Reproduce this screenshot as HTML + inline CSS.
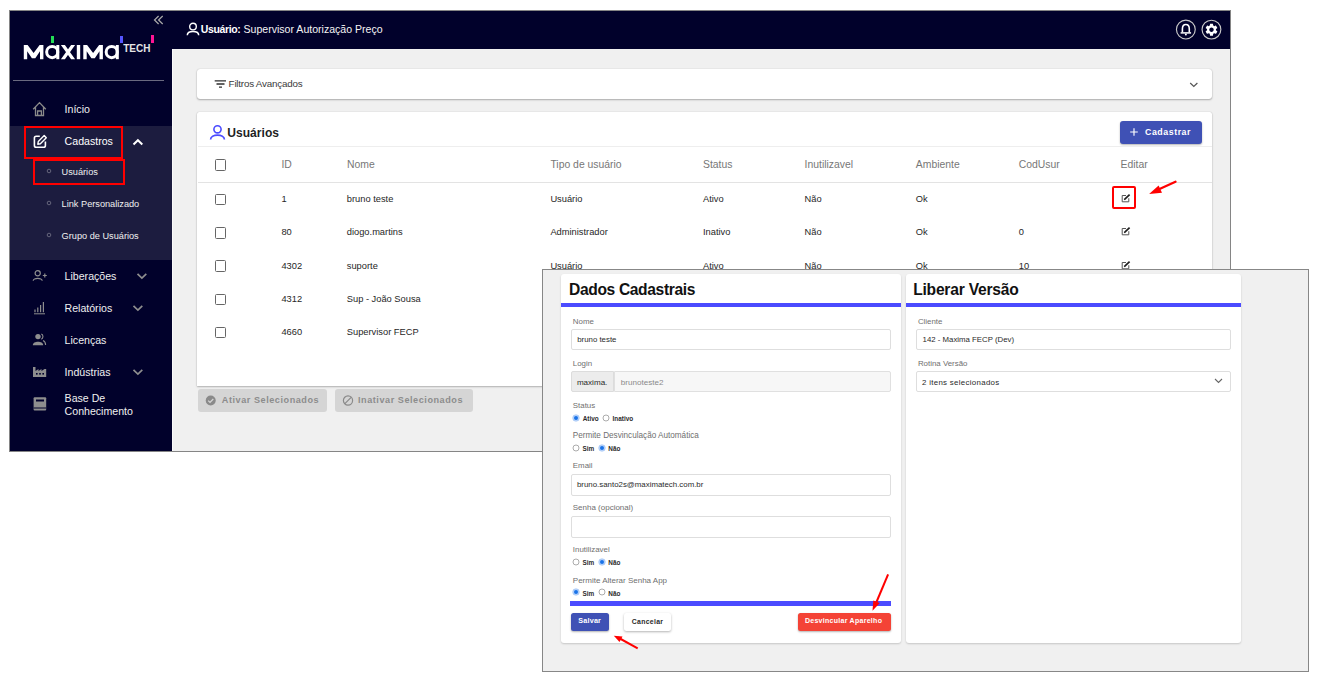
<!DOCTYPE html>
<html><head><meta charset="utf-8"><style>
html,body{margin:0;padding:0;background:#fff;width:1328px;height:692px;overflow:hidden;position:relative;font-family:"Liberation Sans",sans-serif;}
.a{position:absolute;}
.t{position:absolute;line-height:0;white-space:nowrap;}
svg.a{overflow:visible;}
</style></head><body>
<div class="a " style="left:9px;top:10px;width:1222px;height:442px;border:1px solid #858585;box-sizing:border-box;background:#f0f0f0;"></div>
<div class="a " style="left:10px;top:11px;width:162px;height:440px;background:#01012b;"></div>
<div class="a " style="left:172px;top:11px;width:1058px;height:38px;background:#01012b;"></div>
<div class="a " style="left:172px;top:49px;width:1px;height:402px;background:#fafafa;"></div>
<svg class="a" style="left:22px;top:44.6px;" width="100" height="15" viewBox="0 0 100 15"><path d="M1.80 14.20 L1.80 0.00 L5.60 0.00 L11.60 8.00 L17.60 0.00 L21.40 0.00 L21.40 14.20 L18.00 14.20 L18.00 6.20 L13.30 13.20 L9.90 13.20 L5.20 6.20 L5.20 14.20 Z" fill="#fff"/><path d="M61.30 14.20 L61.30 0.00 L65.10 0.00 L71.10 8.00 L77.10 0.00 L80.90 0.00 L80.90 14.20 L77.50 14.20 L77.50 6.20 L72.80 13.20 L69.40 13.20 L64.70 6.20 L64.70 14.20 Z" fill="#fff"/><circle cx="30.2" cy="7.1" r="5.55" fill="none" stroke="#fff" stroke-width="3"/><rect x="34.3" y="0" width="3" height="14.2" fill="#fff"/><circle cx="89.7" cy="7.1" r="5.55" fill="none" stroke="#fff" stroke-width="3"/><rect x="93.8" y="0" width="3" height="14.2" fill="#fff"/><path d="M38.9 0 L42.9 0 L53.1 14.2 L49.1 14.2 Z M49.1 0 L53.1 0 L42.9 14.2 L38.9 14.2 Z" fill="#fff"/><rect x="54.8" y="0" width="3.4" height="14.2" fill="#fff"/></svg>
<div class="a " style="left:50.5px;top:35.6px;width:3.1px;height:7.6px;background:#22dd55;"></div>
<div class="a " style="left:119.6px;top:35.5px;width:3.1px;height:7.6px;background:#5555ff;"></div>
<div class="a " style="left:151px;top:35.3px;width:3.2px;height:8.1px;background:#ff1493;"></div>
<div class="t" style="left:123.2px;top:49.00px;font-size:10px;color:#e6e6e6;font-weight:700;transform:scaleY(1.06);transform-origin:0 0;">TECH</div>
<svg class="a" style="left:153px;top:14.6px;" width="12" height="10" viewBox="0 0 12 10"><path d="M5.6 1 L1.5 5 L5.6 9 M9.7 1 L5.6 5 L9.7 9" fill="none" stroke="#a8a8a8" stroke-width="1.25"/></svg>
<div class="a " style="left:13px;top:80px;width:151px;height:1px;background:#6a6a80;"></div>
<div class="a " style="left:10px;top:126px;width:162px;height:134px;background:#1c1c3f;"></div>
<svg class="a" style="left:32px;top:101px;" width="16" height="16" viewBox="0 0 16 16"><path d="M1.2 8.2 L7.5 1.6 L13.8 8.2 M3.5 6.2 V14.5 H11.5 V6.2 M5.6 14.5 V10 H9.4 V14.5" fill="none" stroke="#8a8a8a" stroke-width="1.3"/></svg>
<div class="t" style="left:64.6px;top:109.00px;font-size:10.6px;color:#f0f0f0;font-weight:400;">Início</div>
<svg class="a" style="left:32px;top:133px;" width="16" height="16" viewBox="0 0 16 16"><path d="M7.8 3.2 H4.2 Q2.4 3.2 2.4 5 V12.4 Q2.4 14.2 4.2 14.2 H11.6 Q13.4 14.2 13.4 12.4 V8.6" fill="none" stroke="#fff" stroke-width="1.6"/><path d="M5.8 11.2 L6.3 8.6 L12.2 2.6 L14.3 4.7 L8.4 10.7 Z" fill="none" stroke="#fff" stroke-width="1.4" stroke-linejoin="round"/></svg>
<div class="t" style="left:64.6px;top:141.00px;font-size:10.6px;color:#fff;font-weight:400;">Cadastros</div>
<svg class="a" style="left:132px;top:138px;" width="12" height="8" viewBox="0 0 12 8"><path d="M1.5 6.5 L5.9 2.2 L10.3 6.5" fill="none" stroke="#fff" stroke-width="2"/></svg>
<svg class="a" style="left:46px;top:167.9px;" width="6" height="6" viewBox="0 0 6 6"><circle cx="3" cy="3" r="1.8" fill="none" stroke="#77778a" stroke-width="0.8"/></svg>
<div class="t" style="left:61.6px;top:172.00px;font-size:9.2px;color:#f0f0f0;font-weight:400;">Usuários</div>
<svg class="a" style="left:46px;top:200px;" width="6" height="6" viewBox="0 0 6 6"><circle cx="3" cy="3" r="1.8" fill="none" stroke="#77778a" stroke-width="0.8"/></svg>
<div class="t" style="left:61.6px;top:204.00px;font-size:9.2px;color:#f0f0f0;font-weight:400;">Link Personalizado</div>
<svg class="a" style="left:46px;top:232.2px;" width="6" height="6" viewBox="0 0 6 6"><circle cx="3" cy="3" r="1.8" fill="none" stroke="#77778a" stroke-width="0.8"/></svg>
<div class="t" style="left:61.6px;top:236.00px;font-size:9.2px;color:#f0f0f0;font-weight:400;">Grupo de Usuários</div>
<div class="a " style="left:23.5px;top:125.5px;width:99.5px;height:33px;border:2.6px solid #ff0000;box-sizing:border-box;"></div>
<div class="a " style="left:33px;top:158.5px;width:92px;height:26px;border:2.6px solid #ff0000;box-sizing:border-box;"></div>
<svg class="a" style="left:32px;top:270px;" width="16" height="12" viewBox="0 0 16 12"><circle cx="5.7" cy="3.3" r="2.6" fill="none" stroke="#8e8e8e" stroke-width="1.2"/><path d="M1.2 10.8 C1.2 7.5 10.2 7.5 10.2 10.8" fill="none" stroke="#8e8e8e" stroke-width="1.2"/><path d="M10.8 5.5 H14.8 M12.8 3.5 V7.5" stroke="#8e8e8e" stroke-width="1.2"/></svg>
<div class="t" style="left:64.6px;top:276.00px;font-size:10.6px;color:#f0f0f0;font-weight:400;">Liberações</div>
<svg class="a" style="left:136px;top:272px;" width="12" height="8" viewBox="0 0 12 8"><path d="M1.5 1.8 L5.9 6 L10.3 1.8" fill="none" stroke="#8e8e8e" stroke-width="1.7"/></svg>
<svg class="a" style="left:32px;top:300px;" width="16" height="16" viewBox="0 0 16 16"><path d="M3 12.2 V9.5 M5.8 12.2 V7.5 M8.6 12.2 V5 M11.4 12.2 V2" stroke="#8e8e8e" stroke-width="1.2"/><path d="M2 13.8 H13" stroke="#8e8e8e" stroke-width="1"/></svg>
<div class="t" style="left:64.5px;top:308.00px;font-size:10.6px;color:#f0f0f0;font-weight:400;">Relatórios</div>
<svg class="a" style="left:132px;top:304px;" width="12" height="8" viewBox="0 0 12 8"><path d="M1.5 1.8 L5.9 6 L10.3 1.8" fill="none" stroke="#8e8e8e" stroke-width="1.7"/></svg>
<svg class="a" style="left:32px;top:333px;" width="16" height="14" viewBox="0 0 16 14"><circle cx="6" cy="3.6" r="2.7" fill="#8e8e8e"/><path d="M0.8 12.2 C0.8 7.6 11.2 7.6 11.2 12.2 Z" fill="#8e8e8e"/><path d="M9.3 1.1 C11.5 1.8 11.5 5.4 9.3 6.2 M11 7.4 C12.8 8.2 13.6 10 13.6 12" fill="none" stroke="#8e8e8e" stroke-width="1.1"/></svg>
<div class="t" style="left:64.6px;top:340.00px;font-size:10.6px;color:#f0f0f0;font-weight:400;">Licenças</div>
<svg class="a" style="left:32px;top:366px;" width="16" height="12" viewBox="0 0 16 12"><path d="M1 11 V1 H3.5 V5 L6.5 3 V5 L9.5 3 V5 L12.5 3 L14.2 3 V11 Z" fill="#8e8e8e"/><rect x="4" y="7" width="1.6" height="1.6" fill="#01012b"/><rect x="7.2" y="7" width="1.6" height="1.6" fill="#01012b"/><rect x="10.4" y="7" width="1.6" height="1.6" fill="#01012b"/></svg>
<div class="t" style="left:64.6px;top:372.00px;font-size:10.6px;color:#f0f0f0;font-weight:400;">Indústrias</div>
<svg class="a" style="left:132px;top:368px;" width="12" height="8" viewBox="0 0 12 8"><path d="M1.5 1.8 L5.9 6 L10.3 1.8" fill="none" stroke="#8e8e8e" stroke-width="1.7"/></svg>
<svg class="a" style="left:32px;top:396px;" width="16" height="16" viewBox="0 0 16 16"><rect x="1.6" y="1.2" width="12.6" height="13.4" rx="1" fill="#8e8e8e"/><rect x="4" y="3.5" width="8" height="2" fill="#01012b"/><path d="M1.6 12 H14.2" stroke="#01012b" stroke-width="1"/></svg>
<div class="t" style="left:64.6px;top:398.00px;font-size:10.6px;color:#f0f0f0;font-weight:400;">Base De</div>
<div class="t" style="left:64.6px;top:411.00px;font-size:10.6px;color:#f0f0f0;font-weight:400;">Conhecimento</div>
<svg class="a" style="left:186px;top:22px;" width="15" height="15" viewBox="0 0 15 15"><circle cx="7" cy="4.6" r="3.3" fill="none" stroke="#fff" stroke-width="1.4"/><path d="M1.3 13.2 C1.3 8.3 12.7 8.3 12.7 13.2" fill="none" stroke="#fff" stroke-width="1.5"/></svg>
<div class="t" style="left:200.8px;top:29.00px;font-size:10.5px;color:#fff;font-weight:700;letter-spacing:-0.36px;">Usuário:</div>
<div class="t" style="left:243.5px;top:29.00px;font-size:10.57px;color:#f4f4f4;font-weight:400;">Supervisor Autorização Preço</div>
<svg class="a" style="left:1175px;top:19.4px;" width="22" height="22" viewBox="0 0 22 22"><circle cx="10.85" cy="10.55" r="9.4" fill="none" stroke="#c9c9c9" stroke-width="1.15"/><path d="M7.4 13.3 V9.9 C7.4 6.8 8.9 5.5 10.85 5.5 C12.8 5.5 14.3 6.8 14.3 9.9 V13.3" fill="none" stroke="#fff" stroke-width="1.6"/><path d="M5.6 13.9 H16.1" stroke="#fff" stroke-width="1.5"/><circle cx="10.85" cy="15.6" r="1" fill="#fff"/></svg>
<svg class="a" style="left:1201px;top:19px;" width="21" height="21" viewBox="0 0 21 21"><circle cx="10.45" cy="10.6" r="9.4" fill="none" stroke="#c9c9c9" stroke-width="1.15"/><path transform="translate(10.5 10.7) scale(0.62) translate(-12 -12)" fill="#fff" fill-rule="evenodd" d="M19.14 12.94c.04-.3.06-.61.06-.94 0-.32-.02-.64-.07-.94l2.03-1.58c.18-.14.23-.41.12-.61l-1.920-3.32c-.12-.22-.37-.29-.59-.22l-2.39.96c-.5-.38-1.03-.7-1.62-.94l-.36-2.54c-.04-.24-.24-.41-.48-.41h-3.84c-.24 0-.43.17-.47.41l-.36 2.54c-.59.24-1.13.57-1.62.94l-2.39-.96c-.22-.08-.47 0-.59.22L2.74 8.87c-.12.21-.08.47.12.61l2.03 1.58c-.05.3-.09.63-.09.94s.02.64.07.94l-2.03 1.58c-.18.14-.23.41-.12.61l1.92 3.32c.12.22.37.29.59.22l2.39-.96c.5.38 1.030.7 1.62.94l.36 2.54c.05.24.24.41.48.41h3.84c.24 0 .44-.17.47-.41l.36-2.54c.59-.24 1.13-.56 1.62-.94l2.39.96c.22.08.47 0 .59-.22l1.92-3.32c.12-.22.07-.47-.12-.61l-2.01-1.58zM12 15.6c-1.98 0-3.6-1.62-3.6-3.6s1.62-3.6 3.6-3.6 3.6 1.62 3.6 3.6-1.62 3.6-3.6 3.6z"/></svg>
<div class="a " style="left:197px;top:69px;width:1015px;height:30px;background:#fff;border-radius:3px;box-shadow:0 1px 2px rgba(0,0,0,0.28),0 0 1px rgba(0,0,0,0.25);"></div>
<svg class="a" style="left:214px;top:79px;" width="13" height="10" viewBox="0 0 13 10"><path d="M0.7 1.8 H12 M2.5 5 H10.5 M5 8.2 H8" stroke="#2e2e2e" stroke-width="1.3"/></svg>
<div class="t" style="left:228.6px;top:84.00px;font-size:9.8px;color:#3a3a3a;font-weight:400;letter-spacing:-0.2px;">Filtros Avançados</div>
<svg class="a" style="left:1189px;top:82px;" width="10" height="6" viewBox="0 0 10 6"><path d="M1.2 1 L4.8 4.5 L8.4 1" fill="none" stroke="#555" stroke-width="1.2"/></svg>
<div class="a " style="left:197px;top:112px;width:1015px;height:273.5px;background:#fff;border-radius:2px 2px 0 0;box-shadow:0 1px 2px rgba(0,0,0,0.25),0 0 1px rgba(0,0,0,0.25);"></div>
<svg class="a" style="left:209px;top:124px;" width="17" height="17" viewBox="0 0 17 17"><circle cx="8.5" cy="5.3" r="3.6" fill="none" stroke="#4b4bff" stroke-width="1.6"/><path d="M1.6 15.6 C1.6 9.6 15.4 9.6 15.4 15.6" fill="none" stroke="#4b4bff" stroke-width="1.7"/></svg>
<div class="t" style="left:227.3px;top:133.00px;font-size:12.08px;color:#1f1f1f;font-weight:700;">Usuários</div>
<div class="a " style="left:1120px;top:121.3px;width:82px;height:23px;background:#3f51b5;border-radius:3px;box-shadow:0 1px 2px rgba(0,0,0,0.3);"></div>
<svg class="a" style="left:1129px;top:127px;" width="10" height="10" viewBox="0 0 10 10"><path d="M5 1.2 V8.8 M1.2 5 H8.8" stroke="#fff" stroke-width="1.15"/></svg>
<div class="t" style="left:1145px;top:132.00px;font-size:8.8px;color:#fff;font-weight:700;letter-spacing:0.55px;">Cadastrar</div>
<div class="a " style="left:198px;top:146px;width:1014px;height:1px;background:#eeeeee;"></div>
<div class="a " style="left:198px;top:182px;width:1014px;height:1px;background:#e3e3e3;"></div>
<div class="t" style="left:281.4px;top:165.00px;font-size:10.4px;color:#777;font-weight:400;">ID</div>
<div class="t" style="left:347px;top:165.00px;font-size:10.4px;color:#777;font-weight:400;">Nome</div>
<div class="t" style="left:550.4px;top:165.00px;font-size:10.4px;color:#777;font-weight:400;">Tipo de usuário</div>
<div class="t" style="left:703px;top:165.00px;font-size:10.4px;color:#777;font-weight:400;">Status</div>
<div class="t" style="left:804.6px;top:165.00px;font-size:10.4px;color:#777;font-weight:400;">Inutilizavel</div>
<div class="t" style="left:915.8px;top:165.00px;font-size:10.4px;color:#777;font-weight:400;">Ambiente</div>
<div class="t" style="left:1018.8px;top:165.00px;font-size:10.4px;color:#777;font-weight:400;">CodUsur</div>
<div class="t" style="left:1120.6px;top:165.00px;font-size:10.4px;color:#777;font-weight:400;">Editar</div>
<div class="a " style="left:214.8px;top:159.2px;width:11.6px;height:11.6px;border:1.7px solid #666;border-radius:1.5px;box-sizing:border-box;"></div>
<div class="a " style="left:214.8px;top:193.7px;width:11.6px;height:11.6px;border:1.7px solid #666;border-radius:1.5px;box-sizing:border-box;"></div>
<div class="t" style="left:281.4px;top:199.00px;font-size:9.3px;color:#262626;font-weight:400;">1</div>
<div class="t" style="left:346.8px;top:199.00px;font-size:9.3px;color:#262626;font-weight:400;">bruno teste</div>
<div class="t" style="left:550.4px;top:199.00px;font-size:9.3px;color:#262626;font-weight:400;">Usuário</div>
<div class="t" style="left:703px;top:199.00px;font-size:9.3px;color:#262626;font-weight:400;">Ativo</div>
<div class="t" style="left:804.6px;top:199.00px;font-size:9.3px;color:#262626;font-weight:400;">Não</div>
<div class="t" style="left:915.8px;top:199.00px;font-size:9.3px;color:#262626;font-weight:400;">Ok</div>
<svg class="a" style="left:1120.5px;top:194.1px;" width="10" height="10" viewBox="0 0 10 10"><path d="M5 1.5 H1.2 V7.8 H7.8 V4.2" fill="none" stroke="#555" stroke-width="1" stroke-linejoin="round"/><path d="M3.3 5.6 L8.6 0.7" stroke="#1e1e1e" stroke-width="1.7"/><path d="M2.9 6.1 L3.2 4.9 L4.1 5.8 Z" fill="#1e1e1e"/></svg>
<div class="a " style="left:214.8px;top:226.99999999999997px;width:11.6px;height:11.6px;border:1.7px solid #666;border-radius:1.5px;box-sizing:border-box;"></div>
<div class="t" style="left:281.4px;top:232.00px;font-size:9.3px;color:#262626;font-weight:400;">80</div>
<div class="t" style="left:346.8px;top:232.00px;font-size:9.3px;color:#262626;font-weight:400;">diogo.martins</div>
<div class="t" style="left:550.4px;top:232.00px;font-size:9.3px;color:#262626;font-weight:400;">Administrador</div>
<div class="t" style="left:703px;top:232.00px;font-size:9.3px;color:#262626;font-weight:400;">Inativo</div>
<div class="t" style="left:804.6px;top:232.00px;font-size:9.3px;color:#262626;font-weight:400;">Não</div>
<div class="t" style="left:915.8px;top:232.00px;font-size:9.3px;color:#262626;font-weight:400;">Ok</div>
<div class="t" style="left:1018.8px;top:232.00px;font-size:9.3px;color:#262626;font-weight:400;">0</div>
<svg class="a" style="left:1120.5px;top:227.39999999999998px;" width="10" height="10" viewBox="0 0 10 10"><path d="M5 1.5 H1.2 V7.8 H7.8 V4.2" fill="none" stroke="#555" stroke-width="1" stroke-linejoin="round"/><path d="M3.3 5.6 L8.6 0.7" stroke="#1e1e1e" stroke-width="1.7"/><path d="M2.9 6.1 L3.2 4.9 L4.1 5.8 Z" fill="#1e1e1e"/></svg>
<div class="a " style="left:214.8px;top:260.3px;width:11.6px;height:11.6px;border:1.7px solid #666;border-radius:1.5px;box-sizing:border-box;"></div>
<div class="t" style="left:281.4px;top:266.00px;font-size:9.3px;color:#262626;font-weight:400;">4302</div>
<div class="t" style="left:346.8px;top:266.00px;font-size:9.3px;color:#262626;font-weight:400;">suporte</div>
<div class="t" style="left:550.4px;top:266.00px;font-size:9.3px;color:#262626;font-weight:400;">Usuário</div>
<div class="t" style="left:703px;top:266.00px;font-size:9.3px;color:#262626;font-weight:400;">Ativo</div>
<div class="t" style="left:804.6px;top:266.00px;font-size:9.3px;color:#262626;font-weight:400;">Não</div>
<div class="t" style="left:915.8px;top:266.00px;font-size:9.3px;color:#262626;font-weight:400;">Ok</div>
<div class="t" style="left:1018.8px;top:266.00px;font-size:9.3px;color:#262626;font-weight:400;">10</div>
<svg class="a" style="left:1120.5px;top:260.7px;" width="10" height="10" viewBox="0 0 10 10"><path d="M5 1.5 H1.2 V7.8 H7.8 V4.2" fill="none" stroke="#555" stroke-width="1" stroke-linejoin="round"/><path d="M3.3 5.6 L8.6 0.7" stroke="#1e1e1e" stroke-width="1.7"/><path d="M2.9 6.1 L3.2 4.9 L4.1 5.8 Z" fill="#1e1e1e"/></svg>
<div class="a " style="left:214.8px;top:293.6px;width:11.6px;height:11.6px;border:1.7px solid #666;border-radius:1.5px;box-sizing:border-box;"></div>
<div class="t" style="left:281.4px;top:299.00px;font-size:9.3px;color:#262626;font-weight:400;">4312</div>
<div class="t" style="left:346.8px;top:299.00px;font-size:9.3px;color:#262626;font-weight:400;">Sup - João Sousa</div>
<div class="a " style="left:214.8px;top:326.9px;width:11.6px;height:11.6px;border:1.7px solid #666;border-radius:1.5px;box-sizing:border-box;"></div>
<div class="t" style="left:281.4px;top:332.00px;font-size:9.3px;color:#262626;font-weight:400;">4660</div>
<div class="t" style="left:346.8px;top:332.00px;font-size:9.3px;color:#262626;font-weight:400;">Supervisor FECP</div>
<div class="a " style="left:1111.6px;top:185.7px;width:24.4px;height:23.6px;border:2.5px solid #ff0000;border-radius:2px;box-sizing:border-box;"></div>
<svg class="a" style="left:1140px;top:175px;" width="45" height="25" viewBox="0 0 45 25"><path d="M35.5 6.8 L19.5 14" stroke="#ff0000" stroke-width="2.3" stroke-linecap="round"/><path d="M9.1 19 L18.6 10.5 L22 17.8 Z" fill="#ff0000"/></svg>
<div class="a " style="left:197.8px;top:389px;width:129.5px;height:22.5px;background:#d5d5d5;border-radius:3px;"></div>
<svg class="a" style="left:205px;top:395px;" width="12" height="12" viewBox="0 0 12 12"><circle cx="5.7" cy="5.5" r="5" fill="#8a8a8a"/><path d="M3.2 5.6 L5 7.4 L8.3 4" fill="none" stroke="#d5d5d5" stroke-width="1.3"/></svg>
<div class="t" style="left:221.8px;top:400.00px;font-size:9.1px;color:#8c8c8c;font-weight:700;letter-spacing:0.55px;">Ativar Selecionados</div>
<div class="a " style="left:334.6px;top:389px;width:138.4px;height:22.5px;background:#d5d5d5;border-radius:3px;"></div>
<svg class="a" style="left:342px;top:395px;" width="12" height="12" viewBox="0 0 12 12"><circle cx="6" cy="5.5" r="4.6" fill="none" stroke="#8a8a8a" stroke-width="1.2"/><path d="M2.9 8.6 L9.1 2.4" stroke="#8a8a8a" stroke-width="1.2"/></svg>
<div class="t" style="left:358px;top:400.00px;font-size:9.1px;color:#8c8c8c;font-weight:700;letter-spacing:0.55px;">Inativar Selecionados</div>
<div class="a " style="left:542px;top:269px;width:767.4px;height:403.4px;border:1.3px solid #878787;box-sizing:border-box;background:#f0f0f0;"></div>
<div class="a " style="left:561px;top:274px;width:340px;height:369px;background:#fff;border-radius:3px;box-shadow:0 1px 2px rgba(0,0,0,0.18);"></div>
<div class="t" style="left:569px;top:290.00px;font-size:15.6px;color:#111;font-weight:700;letter-spacing:-0.35px;">Dados Cadastrais</div>
<div class="a " style="left:561px;top:302.5px;width:340px;height:4.5px;background:#4b4bff;"></div>
<div class="t" style="left:572.8px;top:322.00px;font-size:7.9px;color:#6f6f6f;font-weight:400;">Nome</div>
<div class="a " style="left:570.6px;top:329.4px;width:320px;height:21px;border:1px solid #dedede;border-radius:2px;box-sizing:border-box;background:#fff;"></div>
<div class="t" style="left:577.2px;top:340.00px;font-size:7.85px;color:#2a2a2a;font-weight:400;">bruno teste</div>
<div class="t" style="left:572.8px;top:364.00px;font-size:7.9px;color:#6f6f6f;font-weight:400;">Login</div>
<div class="a " style="left:570.6px;top:371.3px;width:43px;height:21.2px;border:1px solid #dcdcdc;border-radius:2px 0 0 2px;box-sizing:border-box;background:#ececec;"></div>
<div class="t" style="left:576.9px;top:383.00px;font-size:8.07px;color:#2a2a2a;font-weight:400;">maxima.</div>
<div class="a " style="left:614.4px;top:371.3px;width:276.2px;height:21.2px;border:1px solid #e0e0e0;border-radius:0 2px 2px 0;box-sizing:border-box;background:#f7f7f7;"></div>
<div class="t" style="left:620.8px;top:383.00px;font-size:8.07px;color:#8a8a8a;font-weight:400;">brunoteste2</div>
<div class="t" style="left:572.8px;top:406.00px;font-size:7.9px;color:#6f6f6f;font-weight:400;">Status</div>
<svg class="a" style="left:571.8px;top:413.7px;" width="8" height="8" viewBox="0 0 8 8"><circle cx="4" cy="4" r="3.3" fill="#bcd5fa" stroke="#8db8f5" stroke-width="0.5"/><circle cx="4" cy="4" r="2" fill="#1a73e8"/></svg>
<div class="t" style="left:582.7px;top:419.00px;font-size:6.4px;color:#2b2b2b;font-weight:700;">Ativo</div>
<svg class="a" style="left:602px;top:413.7px;" width="8" height="8" viewBox="0 0 8 8"><circle cx="4" cy="4" r="3" fill="#fff" stroke="#8a8a8a" stroke-width="0.7"/></svg>
<div class="t" style="left:612.6px;top:419.00px;font-size:6.4px;color:#2b2b2b;font-weight:700;">Inativo</div>
<div class="t" style="left:572.8px;top:436.00px;font-size:8.17px;color:#6f6f6f;font-weight:400;">Permite Desvinculação Automática</div>
<svg class="a" style="left:571.5px;top:443.9px;" width="8" height="8" viewBox="0 0 8 8"><circle cx="4" cy="4" r="3" fill="#fff" stroke="#8a8a8a" stroke-width="0.7"/></svg>
<div class="t" style="left:582.4px;top:449.00px;font-size:6.4px;color:#2b2b2b;font-weight:700;">Sim</div>
<svg class="a" style="left:597.9px;top:443.9px;" width="8" height="8" viewBox="0 0 8 8"><circle cx="4" cy="4" r="3.3" fill="#bcd5fa" stroke="#8db8f5" stroke-width="0.5"/><circle cx="4" cy="4" r="2" fill="#1a73e8"/></svg>
<div class="t" style="left:608.3px;top:449.00px;font-size:6.4px;color:#2b2b2b;font-weight:700;">Não</div>
<div class="t" style="left:572.8px;top:466.00px;font-size:7.9px;color:#6f6f6f;font-weight:400;">Email</div>
<div class="a " style="left:570.6px;top:473.5px;width:320px;height:22.2px;border:1px solid #dedede;border-radius:2px;box-sizing:border-box;background:#fff;"></div>
<div class="t" style="left:577px;top:485.00px;font-size:7.86px;color:#2a2a2a;font-weight:400;">bruno.santo2s@maximatech.com.br</div>
<div class="t" style="left:572.8px;top:508.00px;font-size:7.99px;color:#6f6f6f;font-weight:400;">Senha (opcional)</div>
<div class="a " style="left:570.6px;top:515.7px;width:320px;height:22px;border:1px solid #dedede;border-radius:2px;box-sizing:border-box;background:#fff;"></div>
<div class="t" style="left:572.8px;top:550.00px;font-size:7.9px;color:#6f6f6f;font-weight:400;">Inutilizavel</div>
<svg class="a" style="left:571.6px;top:558.2px;" width="8" height="8" viewBox="0 0 8 8"><circle cx="4" cy="4" r="3" fill="#fff" stroke="#8a8a8a" stroke-width="0.7"/></svg>
<div class="t" style="left:582.4px;top:563.00px;font-size:6.4px;color:#2b2b2b;font-weight:700;">Sim</div>
<svg class="a" style="left:598.1px;top:558.2px;" width="8" height="8" viewBox="0 0 8 8"><circle cx="4" cy="4" r="3.3" fill="#bcd5fa" stroke="#8db8f5" stroke-width="0.5"/><circle cx="4" cy="4" r="2" fill="#1a73e8"/></svg>
<div class="t" style="left:608.3px;top:563.00px;font-size:6.4px;color:#2b2b2b;font-weight:700;">Não</div>
<div class="t" style="left:572.8px;top:581.00px;font-size:8.01px;color:#6f6f6f;font-weight:400;">Permite Alterar Senha App</div>
<svg class="a" style="left:571.6px;top:588.4px;" width="8" height="8" viewBox="0 0 8 8"><circle cx="4" cy="4" r="3.3" fill="#bcd5fa" stroke="#8db8f5" stroke-width="0.5"/><circle cx="4" cy="4" r="2" fill="#1a73e8"/></svg>
<div class="t" style="left:582.4px;top:594.00px;font-size:6.4px;color:#2b2b2b;font-weight:700;">Sim</div>
<svg class="a" style="left:598.1px;top:588.4px;" width="8" height="8" viewBox="0 0 8 8"><circle cx="4" cy="4" r="3" fill="#fff" stroke="#8a8a8a" stroke-width="0.7"/></svg>
<div class="t" style="left:608.3px;top:594.00px;font-size:6.4px;color:#2b2b2b;font-weight:700;">Não</div>
<div class="a " style="left:570.3px;top:601.3px;width:320.7px;height:4.3px;background:#4b4bff;"></div>
<div class="a " style="left:570.5px;top:613.1px;width:38.5px;height:17.8px;background:#3f51b5;border-radius:2.5px;box-shadow:0 1px 2px rgba(0,0,0,0.3);"></div>
<div class="t" style="left:578.3px;top:621.00px;font-size:7.2px;color:#fff;font-weight:700;letter-spacing:0.2px;">Salvar</div>
<div class="a " style="left:624px;top:613.1px;width:47px;height:18.3px;background:#fff;border-radius:2.5px;box-shadow:0 1px 2.5px rgba(0,0,0,0.3);"></div>
<div class="t" style="left:631.8px;top:622.00px;font-size:6.9px;color:#2a2a2a;font-weight:700;letter-spacing:0.29px;">Cancelar</div>
<div class="a " style="left:797.5px;top:613.1px;width:93.5px;height:17.8px;background:#f44336;border-radius:2.5px;box-shadow:0 1px 2px rgba(0,0,0,0.3);"></div>
<div class="t" style="left:804.9px;top:621.00px;font-size:7.0px;color:#fff;font-weight:700;letter-spacing:0.28px;">Desvincular Aparelho</div>
<svg class="a" style="left:600px;top:630px;" width="45" height="25" viewBox="0 0 45 25"><path d="M37.7 18.3 L18 7.5" stroke="#ff0000" stroke-width="2"/><path d="M13.8 5.8 L22.5 6.5 L19.5 12 Z" fill="#ff0000"/></svg>
<svg class="a" style="left:860px;top:570px;" width="35" height="45" viewBox="0 0 35 45"><path d="M28.1 4.3 L16.5 32" stroke="#ff0000" stroke-width="2"/><path d="M12.5 40.7 L13.3 30.5 L19.8 33 Z" fill="#ff0000"/></svg>
<div class="a " style="left:906px;top:274px;width:335px;height:369px;background:#fff;border-radius:3px;box-shadow:0 1px 2px rgba(0,0,0,0.18);"></div>
<div class="t" style="left:913.2px;top:290.00px;font-size:15.6px;color:#111;font-weight:700;letter-spacing:-0.22px;">Liberar Versão</div>
<div class="a " style="left:906px;top:302.5px;width:335px;height:4.5px;background:#4b4bff;"></div>
<div class="t" style="left:917.9px;top:322.00px;font-size:7.9px;color:#6f6f6f;font-weight:400;">Cliente</div>
<div class="a " style="left:915.7px;top:329.2px;width:315px;height:21.2px;border:1px solid #dedede;border-radius:2px;box-sizing:border-box;background:#fff;"></div>
<div class="t" style="left:922.6px;top:340.00px;font-size:7.82px;color:#2a2a2a;font-weight:400;">142 - Maxima FECP (Dev)</div>
<div class="t" style="left:917.9px;top:364.00px;font-size:7.9px;color:#6f6f6f;font-weight:400;">Rotina Versão</div>
<div class="a " style="left:915.7px;top:371.4px;width:315px;height:21px;border:1px solid #dedede;border-radius:2px;box-sizing:border-box;background:#fff;"></div>
<div class="t" style="left:922px;top:383.00px;font-size:7.9px;color:#2a2a2a;font-weight:400;letter-spacing:0.3px;">2 itens selecionados</div>
<svg class="a" style="left:1214px;top:378px;" width="9" height="6" viewBox="0 0 9 6"><path d="M1 1 L4.5 4.5 L8 1" fill="none" stroke="#666" stroke-width="1.1"/></svg>
</body></html>
